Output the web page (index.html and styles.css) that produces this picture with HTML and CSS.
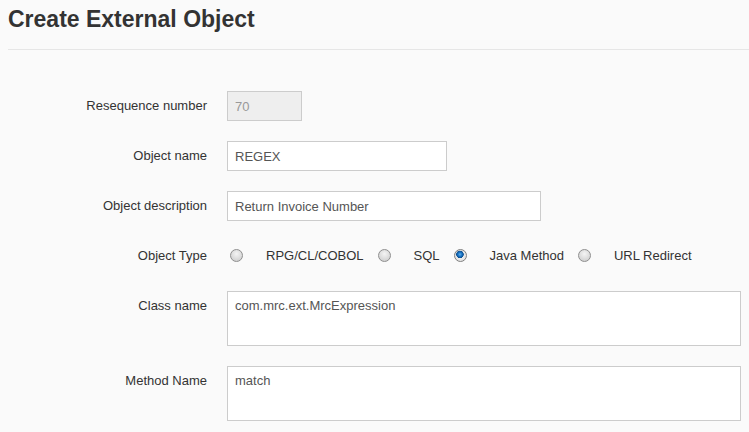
FILE: index.html
```html
<!DOCTYPE html>
<html>
<head>
<meta charset="utf-8">
<link rel="stylesheet" href="styles.css">
</head>
<body>
<div class="page">
  <h1 class="title">Create External Object</h1>
  <hr class="divider">
  <form class="form">
    <div class="row">
      <label class="label">Resequence number</label>
      <div class="field"><input class="input input-seq" type="text" value="70" disabled></div>
    </div>
    <div class="row">
      <label class="label">Object name</label>
      <div class="field"><input class="input input-name" type="text" value="REGEX"></div>
    </div>
    <div class="row">
      <label class="label">Object description</label>
      <div class="field"><input class="input input-desc" type="text" value="Return Invoice Number"></div>
    </div>
    <div class="row">
      <label class="label">Object Type</label>
      <div class="field radios">
        <label class="opt"><input class="radio" type="radio" name="t"><span>RPG/CL/COBOL</span></label>
        <label class="opt"><input class="radio" type="radio" name="t"><span>SQL</span></label>
        <label class="opt"><input class="radio" type="radio" name="t" checked><span>Java Method</span></label>
        <label class="opt"><input class="radio" type="radio" name="t"><span>URL Redirect</span></label>
      </div>
    </div>
    <div class="row row-top">
      <label class="label label-top">Class name</label>
      <div class="field"><textarea class="area">com.mrc.ext.MrcExpression</textarea></div>
    </div>
    <div class="row row-top">
      <label class="label label-top">Method Name</label>
      <div class="field"><textarea class="area">match</textarea></div>
    </div>
  </form>
</div>
</body>
</html>
```

FILE: styles.css
```css
html, body {
  margin: 0;
  padding: 0;
}
body {
  background: #fafafa;
  font-family: "Liberation Sans", Arial, sans-serif;
  color: #333;
  width: 749px;
  height: 432px;
  overflow: hidden;
}
.page {
  padding: 6px 9px 0 8px;
}
.title {
  margin: 0;
  font-size: 23px;
  line-height: 26px;
  font-weight: bold;
  color: #333;
}
.divider {
  border: 0;
  border-top: 1px solid #e6e6e6;
  margin: 17px -9px 0 0;
  height: 0;
}
.form {
  display: flex;
  flex-direction: column;
  gap: 20px;
  padding-top: 41px;
}
.row {
  display: grid;
  grid-template-columns: 199px 1fr;
  column-gap: 20px;
  align-items: center;
  height: 30px;
}
.row-top {
  align-items: start;
  height: 55px;
}
.label {
  text-align: right;
  font-size: 13px;
  color: #333;
  margin-top: -1px;
}
.label-top {
  padding-top: 7px;
  margin-top: 0;
}
.field {
  display: flex;
  align-items: center;
}
.input {
  box-sizing: border-box;
  height: 30px;
  border: 1px solid #ccc;
  background: #fff;
  padding: 0 7px;
  font-family: "Liberation Sans", Arial, sans-serif;
  font-size: 13px;
  color: #555;
  margin: 0;
  border-radius: 0;
}
.input-seq {
  width: 75px;
  background: #eee;
  color: #999;
}
.input-name {
  width: 220px;
}
.input-desc {
  width: 314px;
}
.area {
  box-sizing: border-box;
  width: 514px;
  height: 55px;
  border: 1px solid #ccc;
  background: #fff;
  padding: 6px 7px;
  font-family: "Liberation Sans", Arial, sans-serif;
  font-size: 13px;
  line-height: 16px;
  color: #555;
  resize: none;
  margin: 0;
}
.radios {
  font-size: 13px;
  color: #333;
  margin-top: -1px;
}
.opt {
  display: flex;
  align-items: center;
  margin-right: 11px;
}
.radio {
  appearance: none;
  -webkit-appearance: none;
  box-sizing: border-box;
  width: 13px;
  height: 13px;
  margin: 0 23px 0 3px;
  border-radius: 50%;
  border: 1px solid #8f8f8f;
  background: radial-gradient(circle at 50% 35%, #f4f4f4 0%, #dcdcdc 55%, #c8c8c8 100%);
}
.radio:checked {
  border-color: #7f7f7f;
  background:
    radial-gradient(circle at 45% 40%, #5fb3ef 0px, #1a73c4 2px, #0b4f8f 3.5px, transparent 4px),
    radial-gradient(circle, #f4f4f4 0, #dcdcdc 100%);
}
```
